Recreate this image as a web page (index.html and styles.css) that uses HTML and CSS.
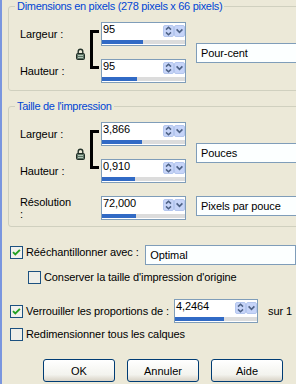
FILE: index.html
```html
<!DOCTYPE html>
<html>
<head>
    <meta charset="UTF-8">
    <title>Redimensionner</title>
    <link rel="stylesheet" href="styles.css">
</head>
<body>
    <div class="dialog">
        <fieldset class="group">
            <legend>Dimensions en pixels (278 pixels x 66 pixels)</legend>
            <div class="size-grid">
                <span class="label row1">Largeur :</span>
                <span class="label row2">Hauteur :</span>
                <svg class="lock" width="9" height="12" viewBox="0 0 9 12">
                    <path d="M2.2 6V3.6a2.3 2.3 0 0 1 4.6 0V6" fill="none" stroke="#26342c" stroke-width="1.4"/>
                    <rect x="0.5" y="5.5" width="8" height="6" rx="1" fill="#5b7263" stroke="#1f2b24"/>
                    <rect x="2" y="7" width="5" height="1" fill="#b4c6b8"/>
                    <rect x="2" y="9" width="5" height="1" fill="#b4c6b8"/>
                </svg>
                <div class="bracket"></div>
                <div class="spin row1">
                    <div class="spin-top">
                        <span class="value">95</span>
                        <svg class="spin-btns" width="22" height="12" viewBox="0 0 22 12">
                            <rect x="0.5" y="0.5" width="10" height="11" rx="1.5" fill="#c6d4f8" stroke="#b4c6ee"/>
                            <rect x="11.5" y="0.5" width="10" height="11" rx="1.5" fill="#c6d4f8" stroke="#b4c6ee"/>
                            <path d="M3 4.6l2.5-2.4 2.5 2.4M3 7.4l2.5 2.4 2.5-2.4" fill="none" stroke="#4d6185" stroke-width="1.5"/>
                            <path d="M13.6 4.4l2.9 3 2.9-3" fill="none" stroke="#4d6185" stroke-width="1.6"/>
                        </svg>
                    </div>
                    <div class="bar"><div class="fill" style="width: 41px"></div></div>
                </div>
                <div class="spin row2">
                    <div class="spin-top">
                        <span class="value">95</span>
                        <svg class="spin-btns" width="22" height="12" viewBox="0 0 22 12">
                            <rect x="0.5" y="0.5" width="10" height="11" rx="1.5" fill="#c6d4f8" stroke="#b4c6ee"/>
                            <rect x="11.5" y="0.5" width="10" height="11" rx="1.5" fill="#c6d4f8" stroke="#b4c6ee"/>
                            <path d="M3 4.6l2.5-2.4 2.5 2.4M3 7.4l2.5 2.4 2.5-2.4" fill="none" stroke="#4d6185" stroke-width="1.5"/>
                            <path d="M13.6 4.4l2.9 3 2.9-3" fill="none" stroke="#4d6185" stroke-width="1.6"/>
                        </svg>
                    </div>
                    <div class="bar"><div class="fill" style="width: 35px"></div></div>
                </div>
                <div class="select pair">Pour-cent</div>
            </div>
        </fieldset>

        <fieldset class="group second">
            <legend>Taille de l'impression</legend>
            <div class="size-grid">
                <span class="label row1">Largeur :</span>
                <span class="label row2">Hauteur :</span>
                <svg class="lock" width="9" height="12" viewBox="0 0 9 12">
                    <path d="M2.2 6V3.6a2.3 2.3 0 0 1 4.6 0V6" fill="none" stroke="#26342c" stroke-width="1.4"/>
                    <rect x="0.5" y="5.5" width="8" height="6" rx="1" fill="#5b7263" stroke="#1f2b24"/>
                    <rect x="2" y="7" width="5" height="1" fill="#b4c6b8"/>
                    <rect x="2" y="9" width="5" height="1" fill="#b4c6b8"/>
                </svg>
                <div class="bracket"></div>
                <div class="spin row1">
                    <div class="spin-top">
                        <span class="value">3,866</span>
                        <svg class="spin-btns" width="22" height="12" viewBox="0 0 22 12">
                            <rect x="0.5" y="0.5" width="10" height="11" rx="1.5" fill="#c6d4f8" stroke="#b4c6ee"/>
                            <rect x="11.5" y="0.5" width="10" height="11" rx="1.5" fill="#c6d4f8" stroke="#b4c6ee"/>
                            <path d="M3 4.6l2.5-2.4 2.5 2.4M3 7.4l2.5 2.4 2.5-2.4" fill="none" stroke="#4d6185" stroke-width="1.5"/>
                            <path d="M13.6 4.4l2.9 3 2.9-3" fill="none" stroke="#4d6185" stroke-width="1.6"/>
                        </svg>
                    </div>
                    <div class="bar"><div class="fill" style="width: 40px"></div></div>
                </div>
                <div class="spin row2">
                    <div class="spin-top">
                        <span class="value">0,910</span>
                        <svg class="spin-btns" width="22" height="12" viewBox="0 0 22 12">
                            <rect x="0.5" y="0.5" width="10" height="11" rx="1.5" fill="#c6d4f8" stroke="#b4c6ee"/>
                            <rect x="11.5" y="0.5" width="10" height="11" rx="1.5" fill="#c6d4f8" stroke="#b4c6ee"/>
                            <path d="M3 4.6l2.5-2.4 2.5 2.4M3 7.4l2.5 2.4 2.5-2.4" fill="none" stroke="#4d6185" stroke-width="1.5"/>
                            <path d="M13.6 4.4l2.9 3 2.9-3" fill="none" stroke="#4d6185" stroke-width="1.6"/>
                        </svg>
                    </div>
                    <div class="bar"><div class="fill" style="width: 33px"></div></div>
                </div>
                <div class="select pair">Pouces</div>

                <span class="label row3">Résolution :</span>
                <div class="spin row3">
                    <div class="spin-top">
                        <span class="value">72,000</span>
                        <svg class="spin-btns" width="22" height="12" viewBox="0 0 22 12">
                            <rect x="0.5" y="0.5" width="10" height="11" rx="1.5" fill="#c6d4f8" stroke="#b4c6ee"/>
                            <rect x="11.5" y="0.5" width="10" height="11" rx="1.5" fill="#c6d4f8" stroke="#b4c6ee"/>
                            <path d="M3 4.6l2.5-2.4 2.5 2.4M3 7.4l2.5 2.4 2.5-2.4" fill="none" stroke="#4d6185" stroke-width="1.5"/>
                            <path d="M13.6 4.4l2.9 3 2.9-3" fill="none" stroke="#4d6185" stroke-width="1.6"/>
                        </svg>
                    </div>
                    <div class="bar"><div class="fill" style="width: 34px"></div></div>
                </div>
                <div class="select row3">Pixels par pouce</div>
            </div>
        </fieldset>

        <div class="options">
            <div class="option opt-resample">
                <label class="check wide-resample">
                    <svg class="box" width="13" height="13" viewBox="0 0 13 13">
                        <rect x="0.5" y="0.5" width="12" height="12" fill="#f1f1ec" stroke="#1c5180"/>
                        <path d="M3 6.2l2.3 2.3 4.6-4.6" fill="none" stroke="#21a121" stroke-width="1.9"/>
                    </svg>
                    <span>Rééchantillonner avec :</span>
                </label>
                <div class="select short">Optimal</div>
            </div>

            <div class="option opt-keep">
                <label class="check">
                    <svg class="box" width="13" height="13" viewBox="0 0 13 13">
                        <rect x="0.5" y="0.5" width="12" height="12" fill="#eeeee8" stroke="#1c5180"/>
                    </svg>
                    <span>Conserver la taille d'impression d'origine</span>
                </label>
            </div>

            <div class="option opt-lock">
                <label class="check wide-lock">
                    <svg class="box" width="13" height="13" viewBox="0 0 13 13">
                        <rect x="0.5" y="0.5" width="12" height="12" fill="#f1f1ec" stroke="#1c5180"/>
                        <path d="M3 6.2l2.3 2.3 4.6-4.6" fill="none" stroke="#21a121" stroke-width="1.9"/>
                    </svg>
                    <span>Verrouiller les proportions de :</span>
                </label>
                <div class="spin small">
                    <div class="spin-top">
                        <span class="value">4,2464</span>
                        <svg class="spin-btns" width="22" height="12" viewBox="0 0 22 12">
                            <rect x="0.5" y="0.5" width="10" height="11" rx="1.5" fill="#c6d4f8" stroke="#b4c6ee"/>
                            <rect x="11.5" y="0.5" width="10" height="11" rx="1.5" fill="#c6d4f8" stroke="#b4c6ee"/>
                            <path d="M3 4.6l2.5-2.4 2.5 2.4M3 7.4l2.5 2.4 2.5-2.4" fill="none" stroke="#4d6185" stroke-width="1.5"/>
                            <path d="M13.6 4.4l2.9 3 2.9-3" fill="none" stroke="#4d6185" stroke-width="1.6"/>
                        </svg>
                    </div>
                    <div class="bar"><div class="fill" style="width: 49px"></div></div>
                </div>
                <span class="ratio">sur 1</span>
            </div>

            <div class="option opt-layers">
                <label class="check">
                    <svg class="box" width="13" height="13" viewBox="0 0 13 13">
                        <rect x="0.5" y="0.5" width="12" height="12" fill="#eeeee8" stroke="#1c5180"/>
                    </svg>
                    <span>Redimensionner tous les calques</span>
                </label>
            </div>
        </div>

        <div class="buttons">
            <button>OK</button>
            <button>Annuler</button>
            <button>Aide</button>
        </div>
    </div>
</body>
</html>
```

FILE: styles.css
```css
html, body {
    margin: 0;
    width: 296px;
    height: 384px;
    overflow: hidden;
}
body {
    font-family: "Liberation Sans", Arial, sans-serif;
    font-size: 11px;
    letter-spacing: -0.1px;
    color: #000;
    background: #ece9d8;
}
.dialog {
    height: 384px;
    border-left: 2px solid #7a96df;
    box-sizing: border-box;
}
.group {
    margin: 0 0 0 6px;
    padding: 9px 0 7px 11px;
    border: 1px solid #d0d0bf;
    border-radius: 3px;
    width: 330px;
    box-sizing: border-box;
}
.group legend {
    color: #0046d5;
    font-weight: normal;
    letter-spacing: -0.3px;
    padding: 0 2px;
    margin-left: -5px;
    line-height: 13px;
}
.group.second {
    margin-top: 9px;
    padding-bottom: 6px;
}
.size-grid {
    display: grid;
    grid-template-columns: 56px 14px 11px 85px 10px 130px;
    grid-template-rows: 24px 24px;
    grid-auto-rows: 24px;
    row-gap: 13px;
    align-items: center;
}
.label {
    grid-column: 1;
}
.row1 { grid-row: 1; }
.row2 { grid-row: 2; }
.row3 { grid-row: 3; }
.lock {
    grid-column: 2;
    grid-row: 1 / 3;
    margin-top: 2px;
}
.bracket {
    grid-column: 3;
    grid-row: 1 / 3;
    align-self: start;
    margin-top: 8px;
    width: 9px;
    height: 39px;
    box-sizing: border-box;
    border: 3px solid #000;
    border-right: none;
}
.spin {
    grid-column: 4;
    height: 24px;
    border: 1px solid #7f9db9;
    background: #fff;
    box-sizing: border-box;
    display: flex;
    flex-direction: column;
}
.spin-top {
    flex: 1;
    display: flex;
    align-items: flex-start;
    padding-left: 1px;
}
.value {
    line-height: 13px;
}
.spin-btns {
    margin-left: auto;
    margin-top: 2px;
}
.bar {
    height: 4px;
    margin: 0 0 1px 0;
    background: #dcdcdc;
}
.fill {
    height: 100%;
    background: #316ac5;
}
.select {
    grid-column: 6;
    height: 20px;
    line-height: 18px;
    padding-left: 4px;
    border: 1px solid #7f9db9;
    background: #fcffff;
    box-sizing: border-box;
}
.select.pair {
    grid-row: 1 / 3;
}
.select.row3 {
    align-self: start;
}
.options {
    padding-left: 8px;
    margin-top: 18px;
}
.option {
    display: flex;
    align-items: flex-start;
}
.check {
    display: flex;
    align-items: center;
    gap: 3px;
    line-height: 13px;
}
.box {
    flex: none;
}
.wide-resample {
    width: 144px;
    margin-top: 1px;
}
.select.short {
    width: 160px;
}
.opt-keep {
    margin-top: 6px;
    margin-left: 18px;
}
.opt-lock {
    margin-top: 15px;
    align-items: center;
}
.wide-lock {
    width: 164px;
}
.spin.small {
    width: 84px;
}
.ratio {
    margin-left: 10px;
    white-space: nowrap;
}
.opt-layers {
    margin-top: 5px;
}
.buttons {
    display: flex;
    gap: 12px;
    padding-left: 41px;
    margin-top: 18px;
}
button {
    width: 72px;
    height: 23px;
    padding: 0;
    font-family: "Liberation Sans", Arial, sans-serif;
    font-size: 11px;
    color: #000;
    border: 1px solid #003c74;
    border-radius: 3px;
    background: linear-gradient(#ffffff, #f3f3ee 70%, #d8d2c6);
}
```
